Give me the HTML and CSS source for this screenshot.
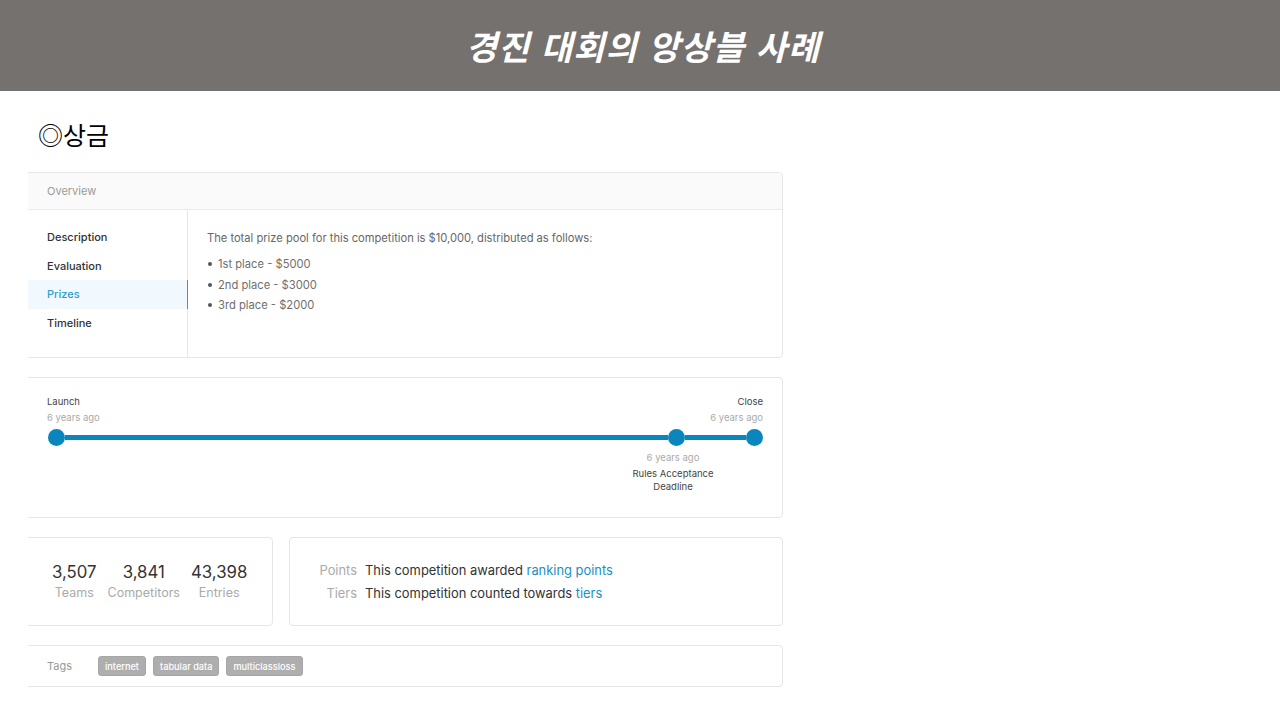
FILE: index.html
```html
<!DOCTYPE html>
<html lang="ko">
<head>
<meta charset="utf-8">
<title>경진 대회의 앙상블 사례</title>
<link rel="stylesheet" href="styles.css">
</head>
<body>
<header class="banner">
  <h1 class="banner-title">경진 대회의 앙상블 사례</h1>
</header>
<main class="page">
  <h2 class="section-title">◎상금</h2>
  <div class="clip">
    <div class="stack">
      <section class="card overview">
        <div class="overview-head">Overview</div>
        <div class="overview-body">
          <nav class="side">
            <div class="side-item">Description</div>
            <div class="side-item">Evaluation</div>
            <div class="side-item active">Prizes</div>
            <div class="side-item">Timeline</div>
          </nav>
          <div class="content">
            <p class="lead">The total prize pool for this competition is $10,000, distributed as follows:</p>
            <ul class="prizes">
              <li>1st place - $5000</li>
              <li>2nd place - $3000</li>
              <li>3rd place - $2000</li>
            </ul>
          </div>
        </div>
      </section>

      <section class="card timeline">
        <div class="tl-labels">
          <div class="tl-end">
            <div class="tl-name">Launch</div>
            <div class="tl-when">6 years ago</div>
          </div>
          <div class="tl-end right">
            <div class="tl-name">Close</div>
            <div class="tl-when">6 years ago</div>
          </div>
        </div>
        <div class="track">
          <span class="dot"></span>
          <span class="line grow"></span>
          <span class="dot"></span>
          <span class="line short"></span>
          <span class="dot"></span>
        </div>
        <div class="tl-mid">
          <div class="tl-caption">
            <div class="tl-when">6 years ago</div>
            <div class="tl-name two">Rules Acceptance<br>Deadline</div>
          </div>
        </div>
      </section>

      <div class="row">
        <section class="card stats">
          <div class="stat">
            <div class="num">3,507</div>
            <div class="lbl">Teams</div>
          </div>
          <div class="stat">
            <div class="num">3,841</div>
            <div class="lbl">Competitors</div>
          </div>
          <div class="stat">
            <div class="num">43,398</div>
            <div class="lbl">Entries</div>
          </div>
        </section>
        <section class="card awards">
          <div class="aw-label">Points</div>
          <div class="aw-text">This competition awarded <a class="link">ranking points</a></div>
          <div class="aw-label">Tiers</div>
          <div class="aw-text">This competition counted towards <a class="link">tiers</a></div>
        </section>
      </div>

      <section class="card tags">
        <span class="tags-label">Tags</span>
        <span class="tag">internet</span>
        <span class="tag">tabular data</span>
        <span class="tag">multiclassloss</span>
      </section>
    </div>
  </div>
</main>
</body>
</html>
```

FILE: styles.css
```css
* { box-sizing: border-box; }

body {
  margin: 0;
  background: #ffffff;
  font-family: Inter, "Noto Sans", "Noto Sans CJK KR", sans-serif;
  color: #333333;
}

.banner {
  height: 91px;
  background: #75716f;
  display: flex;
  align-items: center;
  justify-content: center;
}

.banner-title {
  margin: 0;
  padding-left: 6px;
  font-family: "Noto Sans CJK KR", sans-serif;
  font-size: 34px;
  font-weight: 700;
  font-style: italic;
  letter-spacing: 1px;
  color: #ffffff;
  line-height: 1;
}

.page {
  padding-top: 28px;
}

.section-title {
  margin: 0 0 22px 38px;
  font-family: "Noto Sans CJK KR", sans-serif;
  font-size: 25px;
  font-weight: 400;
  line-height: 31px;
  color: #000000;
}

.clip {
  margin-left: 28px;
  width: 755px;
  overflow: hidden;
}

.stack {
  margin-left: -8px;
  display: flex;
  flex-direction: column;
  gap: 19px;
}

.card {
  border: 1px solid #e6e6e6;
  border-radius: 4px;
  background: #ffffff;
}

/* Overview card */
.overview-head {
  height: 37px;
  padding-left: 26px;
  display: flex;
  align-items: center;
  background: #fafafa;
  border-bottom: 1px solid #ebebeb;
  border-radius: 4px 4px 0 0;
  font-size: 11px;
  color: #9a9a9a;
}

.overview-body {
  display: flex;
  height: 147px;
}

.side {
  width: 167px;
  flex: none;
  border-right: 1px solid #e6e6e6;
  padding-top: 13px;
}

.side-item {
  height: 28.7px;
  line-height: 28.7px;
  padding-left: 26px;
  font-size: 11px;
  font-weight: 500;
  color: #333333;
}

.side-item.active {
  background: #f1f9fe;
  color: #2a9fd0;
  margin-right: -1px;
  border-right: 1px solid #2a9fd0;
}

.content {
  padding: 20px 0 0 19px;
}

.lead {
  margin: 0;
  font-size: 11.15px;
  line-height: 16px;
  color: #666666;
}

.prizes {
  margin: 8px 0 0 0;
  padding: 0;
  list-style: none;
}

.prizes li {
  display: flex;
  align-items: center;
  gap: 6px;
  height: 20.5px;
  font-size: 11.2px;
  color: #6f6f6f;
}

.prizes li::before {
  content: "";
  width: 4px;
  height: 4px;
  border-radius: 50%;
  background: #555555;
  margin-left: 1px;
}

/* Timeline card */
.timeline {
  height: 141px;
  padding: 16px 19px 0 26px;
}

.tl-labels {
  display: flex;
  justify-content: space-between;
}

.tl-end.right { text-align: right; }

.tl-name {
  font-size: 9.5px;
  line-height: 16px;
  color: #444444;
}

.tl-when {
  font-size: 9.5px;
  line-height: 16px;
  color: #aaaaaa;
}

.track {
  display: flex;
  align-items: center;
  height: 16px;
  margin: 3px 0 0 1px;
}

.dot {
  flex: none;
  width: 17px;
  height: 17px;
  border-radius: 50%;
  background: #0a86bd;
}

.line {
  height: 5px;
  background: #0a86bd;
}

.line.grow { flex: 1; }
.line.short { width: 61px; flex: none; }

.tl-mid {
  display: flex;
  justify-content: flex-end;
  margin-top: 5px;
}

.tl-caption {
  width: 110px;
  margin-right: 35px;
  text-align: center;
}

.tl-name.two {
  line-height: 13px;
  margin-top: 1px;
}

/* Stats row */
.row {
  display: flex;
  gap: 16px;
}

.stats {
  width: 253px;
  height: 89px;
  flex: none;
  display: flex;
  gap: 11px;
  padding: 22px 0 0 31px;
}

.stat { text-align: center; }

.num {
  font-size: 16.8px;
  line-height: 24px;
  color: #333333;
}

.lbl {
  font-size: 12.5px;
  line-height: 18px;
  color: #aaaaaa;
}

.awards {
  flex: 1;
  height: 89px;
  display: grid;
  grid-template-columns: 67px auto;
  grid-auto-rows: 23px;
  column-gap: 8px;
  align-items: center;
  align-content: start;
  padding-top: 21px;
  font-size: 12.9px;
}

.aw-label {
  text-align: right;
  color: #aaaaaa;
}

.aw-text { color: #333333; }

.link { color: #1a8fc4; text-decoration: none; }

/* Tags */
.tags {
  height: 42px;
  display: flex;
  align-items: center;
  gap: 7px;
  padding-left: 26px;
}

.tags-label {
  font-size: 11px;
  color: #999999;
  width: 44px;
}

.tag {
  height: 20px;
  padding: 0 6px;
  display: flex;
  align-items: center;
  background: #aeaeae;
  border: 1px solid #a6a6a6;
  border-radius: 3px;
  color: #ffffff;
  font-size: 9.2px;
  font-weight: 500;
}
```
